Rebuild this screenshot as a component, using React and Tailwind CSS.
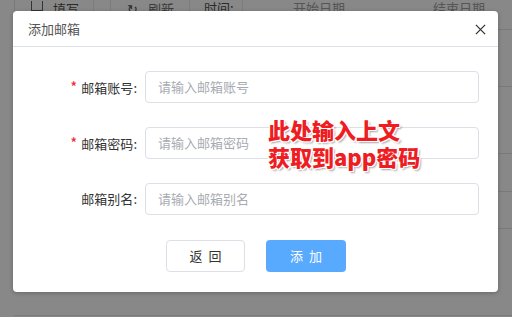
import React from "react";

const fields = [
  { label: "邮箱账号", placeholder: "请输入邮箱账号", required: true },
  { label: "邮箱密码", placeholder: "请输入邮箱密码", required: true },
  { label: "邮箱别名", placeholder: "请输入邮箱别名", required: false },
];

const App = () => {
  return (
    <div
      className="relative w-[512px] h-[317px] overflow-hidden bg-[#888888]"
      style={{ fontFamily: '"Noto Sans CJK SC", "Noto Sans", sans-serif' }}
    >
      {/* page behind the overlay */}
      <div className="flex h-[12px] items-end text-[13px] leading-none text-[#2a2a2a] border-l border-[#7a7a7a] ml-[14px]">
        <div className="flex items-end h-full w-[79px] pl-[16px] gap-[10px] border-r border-[#7c7c7c] overflow-hidden">
          <span className="block w-[12px] h-[10px] border border-[#333] border-t-0 mb-[1px]"></span>
          <span className="-mb-[3px]">填写</span>
        </div>
        <div className="h-full w-[17px] border-r border-[#7c7c7c]"></div>
        <div className="flex items-end h-full w-[79px] pl-[16px] gap-[10px] border-r border-[#7c7c7c]">
          <span className="-mb-[3px]">↻</span>
          <span className="-mb-[3px] text-[#3a3a3a]">刷新</span>
        </div>
        <div className="h-full w-[53px] pl-[14px] border-r border-[#7c7c7c]">
          <span className="block -mb-[3px] mt-[1px]">时间:</span>
        </div>
        <div className="h-full w-[150px] pl-[50px] text-[#555]">
          <span className="block mt-[1px]">开始日期</span>
        </div>
        <div className="h-full pl-[40px] text-[#555]">
          <span className="block mt-[1px]">结束日期</span>
        </div>
      </div>
      <div className="absolute right-0 top-0 w-[20px] flex flex-col">
        <div className="h-[30px] border-b border-[#7a7a7a]"></div>
        <div className="h-[57px] border-b border-[#7a7a7a]"></div>
        <div className="h-[67px] border-b border-[#7a7a7a]"></div>
        <div className="h-[38px] border-b border-[#7a7a7a]"></div>
        <div className="h-[37px] border-b border-[#7a7a7a]"></div>
      </div>
      <div className="absolute left-[14px] right-0 bottom-[1px] border-b border-[#7a7a7a]"></div>

      {/* dialog */}
      <div className="absolute left-[13px] top-[11px] w-[485px] h-[281px] bg-white rounded-[4px] shadow-[0_1px_4px_rgba(0,0,0,0.25)] flex flex-col">
        <div className="flex items-center justify-between h-[36px] pl-[15px] pr-[12px] border-b border-[#dcdfe6]">
          <span className="text-[13px] text-[#555] mt-[1px]">添加邮箱</span>
          <svg width="11" height="11" viewBox="0 0 12 12" className="mt-[1px]">
            <path d="M1 1 L11 11 M11 1 L1 11" stroke="#333" strokeWidth="1.4" />
          </svg>
        </div>

        <div className="flex flex-col gap-[24px] pt-[24px] pr-[19px]">
          {fields.map((f) => (
            <div key={f.label} className="flex items-center">
              <label className="w-[124px] text-right text-[13px] text-[#333]">
                {f.required && <span className="text-[#f0242f] text-[15px] mr-[4px]">*</span>}
                {f.label}:
              </label>
              <div className="ml-[8px] flex-1 h-[32px] border border-[#dcdfe6] rounded-[4px] flex items-center pl-[12px] text-[13px] text-[#a8abb2]">
                {f.placeholder}
              </div>
            </div>
          ))}
        </div>

        <div className="flex justify-center gap-[21px] mt-[25px] pl-[1px]">
          <button className="w-[79px] h-[32px] border border-[#dcdfe6] rounded-[4px] bg-white text-[13px] text-[#333] tracking-[6px] pl-[6px]">
            返回
          </button>
          <button className="w-[80px] h-[32px] rounded-[4px] bg-[#58aafe] text-[13px] text-white tracking-[6px] pl-[6px]">
            添加
          </button>
        </div>
      </div>

      {/* annotation */}
      <div
        className="absolute left-[268px] top-[116px] text-[22px] font-black leading-[27px] text-[#ee1d23]"
        style={{
          textShadow:
            "1px 0 0 #fff, -1px 0 0 #fff, 0 1px 0 #fff, 0 -1px 0 #fff, 1px 1px 0 #fff, -1px -1px 0 #fff, 1px -1px 0 #fff, -1px 1px 0 #fff, 2px 2px 2px rgba(0,0,0,0.35)",
        }}
      >
        <div>此处输入上文</div>
        <div>获取到app密码</div>
      </div>
    </div>
  );
};

export default App;
